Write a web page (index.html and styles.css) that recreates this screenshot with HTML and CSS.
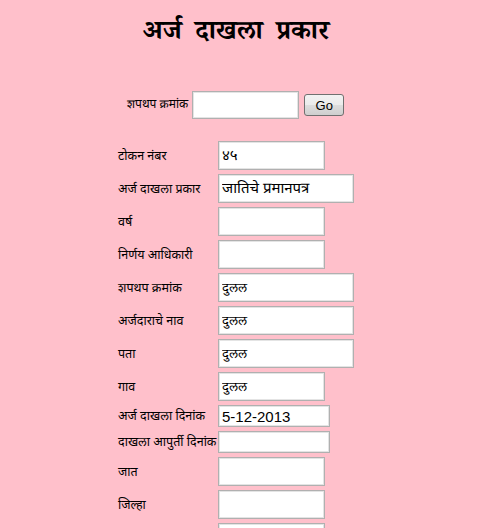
FILE: index.html
```html
<!DOCTYPE html>
<html lang="mr">
<head>
<meta charset="utf-8">
<title>अर्ज दाखला प्रकार</title>
<link rel="stylesheet" href="styles.css">
</head>
<body>
<div class="page">
  <h1 class="title">अर्ज दाखला प्रकार</h1>
  <div class="search">
    <span class="search-label">शपथप क्रमांक</span>
    <input class="search-input" type="text">
    <button class="go" type="button">Go</button>
  </div>
  <div class="form">
    <label class="lbl">टोकन नंबर</label><input class="fld w107" type="text" value="४५">
    <label class="lbl">अर्ज दाखला प्रकार</label><input class="fld w136" type="text" value="जातिचे प्रमानपत्र">
    <label class="lbl">वर्ष</label><input class="fld w107" type="text">
    <label class="lbl">निर्णय आधिकारी</label><input class="fld w107" type="text">
    <label class="lbl">शपथप क्रमांक</label><input class="fld w136 odd" type="text" value="दुलल">
    <label class="lbl">अर्जदाराचे नाव</label><input class="fld w136 odd" type="text" value="दुलल">
    <label class="lbl">पता</label><input class="fld w136 odd" type="text" value="दुलल">
    <label class="lbl">गाव</label><input class="fld w107 odd" type="text" value="दुलल">
    <label class="lbl">अर्ज दाखला दिनांक</label><input class="fld date" type="text" value="5-12-2013">
    <label class="lbl">दाखला आपुर्ती दिनांक</label><input class="fld date" type="text">
    <label class="lbl">जात</label><input class="fld w107" type="text">
    <label class="lbl">जिल्हा</label><input class="fld w107" type="text">
    <span class="lbl"></span><input class="fld w107" type="text">
  </div>
</div>
</body>
</html>
```
FILE: styles.css
```css
html, body {
  margin: 0;
  padding: 0;
  background: #ffc0cb;
  overflow: hidden;
}
.page {
  width: 472px;
  font-family: "Noto Sans Devanagari", "Noto Sans", "Liberation Sans", sans-serif;
  color: #000;
}
.title {
  margin: 0;
  padding-top: 19px;
  text-align: center;
  font-family: "Noto Serif Devanagari", "Noto Sans Devanagari", "Noto Sans", serif;
  font-size: 27px;
  font-weight: bold;
  word-spacing: 6px;
  line-height: 32px;
}
.search {
  display: flex;
  align-items: center;
  padding-left: 127px;
  margin-top: 40px;
  height: 28px;
}
.search-label {
  font-size: 12px;
  margin-right: 4px;
}
.search-input {
  box-sizing: border-box;
  width: 107px;
  height: 28px;
  border: 1px solid #b0b0b0;
  box-shadow: inset 0 0 0 1px #e4e4e4;
  background: #fff;
  margin: 0 5px 0 0;
  padding: 0 3px;
}
.go {
  box-sizing: border-box;
  width: 40px;
  height: 22px;
  margin: 0;
  padding: 0;
  border: 1px solid #707070;
  border-radius: 3px;
  background: linear-gradient(#f2f2f2 0%, #ebebeb 50%, #dddddd 51%, #cfcfcf 100%);
  font-family: "Liberation Sans", Arial, sans-serif;
  font-size: 13px;
  color: #000;
}
.form {
  display: grid;
  grid-template-columns: 100px auto;
  row-gap: 4px;
  align-items: center;
  justify-items: start;
  margin-top: 22px;
  padding-left: 118px;
}
.lbl {
  font-size: 12.5px;
  white-space: nowrap;
  padding-top: 2px;
}
.fld {
  box-sizing: border-box;
  height: 29px;
  margin: 0;
  padding: 2px 3px 0;
  border: 1px solid #b0b0b0;
  box-shadow: inset 0 0 0 1px #e4e4e4;
  background: #fff;
  font-family: "Noto Sans Devanagari", "Noto Sans", sans-serif;
  font-size: 15px;
  color: #000;
}
.odd { font-size: 13px; }
.w107 { width: 107px; }
.w136 { width: 136px; }
.date {
  width: 112px;
  height: 22px;
  padding-top: 0;
  font-family: "Liberation Sans", Arial, sans-serif;
  font-size: 15px;
}
```
